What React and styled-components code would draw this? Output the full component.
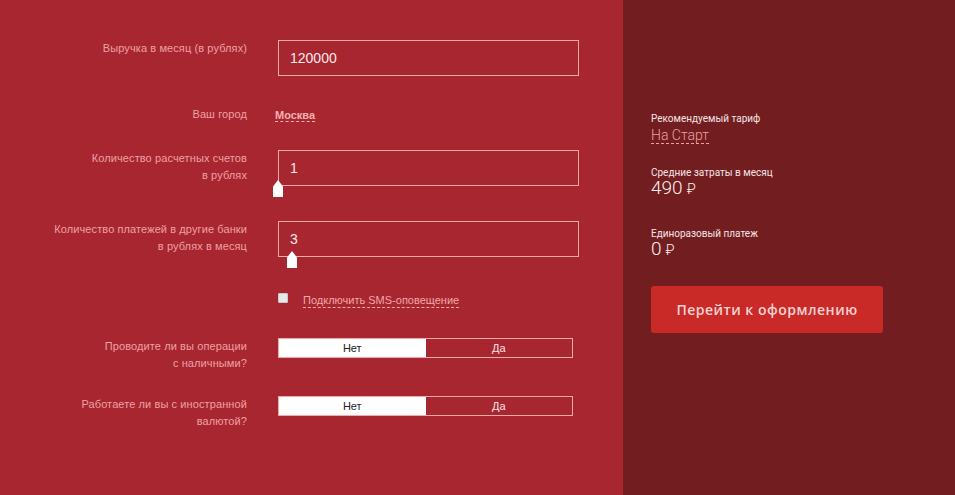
import React from "react";
import styled, { createGlobalStyle } from "styled-components";

const GlobalStyle = createGlobalStyle`
  html, body {
    margin: 0;
    padding: 0;
    background: #a8262f;
  }
  body {
    font-family: "Liberation Sans", Arial, sans-serif;
  }
`;

const Page = styled.div`
  display: flex;
  width: 955px;
  height: 495px;
  overflow: hidden;
`;

const FormPanel = styled.div`
  width: 623px;
  background: #a8262f;
  padding-top: 40px;
  box-sizing: border-box;
`;

const SidePanel = styled.div`
  flex: 1;
  background: #721d20;
  padding: 113px 0 0 28px;
  box-sizing: border-box;
  font-family: Roboto, "Liberation Sans", sans-serif;
`;

const Row = styled.div`
  display: grid;
  grid-template-columns: 247px 301px;
  column-gap: 31px;
  margin-top: ${(p) => p.$mt || 0}px;
  min-height: ${(p) => p.$h || 0}px;
  align-items: ${(p) => (p.$center ? "center" : "start")};
`;

const Label = styled.div`
  text-align: right;
  font-size: 11px;
  line-height: 17px;
  letter-spacing: 0.1px;
  color: #eea0a5;
`;

const Field = styled.div`
  position: relative;
  width: 301px;
`;

const Input = styled.div`
  height: 36px;
  box-sizing: border-box;
  border: 1px solid #f3a8aa;
  padding-left: 11px;
  display: flex;
  align-items: center;
  font-size: 14px;
  color: #fbe9ea;
`;

const Handle = styled.span`
  position: absolute;
  top: 30px;
  left: ${(p) => p.$left}px;
  width: 10px;
  height: 17px;
  background: #fff;
  clip-path: polygon(50% 0, 100% 38%, 100% 100%, 0 100%, 0 38%);
`;

const DashedLink = styled.span`
  display: inline-block;
  font-size: ${(p) => p.$size || 11}px;
  font-weight: ${(p) => p.$weight || 400};
  color: ${(p) => p.$color || "#f2a6aa"};
  line-height: 1.1;
  border-bottom: 1px dashed ${(p) => p.$color || "#f2a6aa"};
  margin-left: ${(p) => p.$ml || 0}px;
`;

const CheckRow = styled.label`
  display: flex;
  align-items: center;
  gap: 15px;
`;

const Check = styled.span`
  width: 8px;
  height: 8px;
  margin-top: -6px;
  border: 1px solid #c9c9c9;
  background: #e8e8e8;
  border-radius: 1px;
`;

const Toggle = styled.div`
  display: grid;
  grid-template-columns: 1fr 1fr;
  width: 295px;
  height: 20px;
  box-sizing: border-box;
  border: 1px solid #f3a8aa;
`;

const ToggleOption = styled.div`
  display: flex;
  align-items: center;
  justify-content: center;
  font-size: 11px;
  background: ${(p) => (p.$active ? "#ffffff" : "transparent")};
  color: ${(p) => (p.$active ? "#222" : "#fbe3e4")};
`;

const Caption = styled.div`
  font-size: 10px;
  line-height: 12px;
  color: #f6e4e4;
  margin-top: ${(p) => p.$mt || 0}px;
`;

const Amount = styled.div`
  font-size: 19px;
  line-height: 18px;
  font-weight: 300;
  color: #fbeeee;
  span {
    font-size: 14px;
    margin-left: 4px;
  }
`;

const Button = styled.button`
  display: block;
  margin-top: 27px;
  width: 232px;
  height: 47px;
  border: none;
  border-radius: 3px;
  background: #c92a27;
  color: #f7d3d2;
  font-family: "Open Sans", sans-serif;
  font-size: 14px;
  font-weight: 600;
  letter-spacing: 0.5px;
  cursor: pointer;
`;

const YesNo = ({ label }) => (
  <>
    <Label>{label}</Label>
    <Toggle>
      <ToggleOption $active>Нет</ToggleOption>
      <ToggleOption>Да</ToggleOption>
    </Toggle>
  </>
);

export default function App() {
  return (
    <Page>
      <GlobalStyle />
      <FormPanel>
        <Row>
          <Label>Выручка в месяц (в рублях)</Label>
          <Field>
            <Input>120000</Input>
          </Field>
        </Row>
        <Row $mt={28} $h={20} $center>
          <Label>Ваш город</Label>
          <div>
            <DashedLink $weight={700} $ml={-3} $color="#f6b0b3">
              Москва
            </DashedLink>
          </div>
        </Row>
        <Row $mt={26}>
          <Label>
            Количество расчетных счетов
            <br />в рублях
          </Label>
          <Field>
            <Input>1</Input>
            <Handle $left={-5} />
          </Field>
        </Row>
        <Row $mt={35}>
          <Label>
            Количество платежей в другие банки
            <br />в рублях в месяц
          </Label>
          <Field>
            <Input>3</Input>
            <Handle $left={9} />
          </Field>
        </Row>
        <Row $mt={35} $h={18} $center>
          <div />
          <CheckRow>
            <Check />
            <DashedLink>Подключить SMS-оповещение</DashedLink>
          </CheckRow>
        </Row>
        <Row $mt={28}>
          <YesNo
            label={
              <>
                Проводите ли вы операции
                <br />с наличными?
              </>
            }
          />
        </Row>
        <Row $mt={24}>
          <YesNo
            label={
              <>
                Работаете ли вы с иностранной
                <br />
                валютой?
              </>
            }
          />
        </Row>
      </FormPanel>
      <SidePanel>
        <Caption>Рекомендуемый тариф</Caption>
        <DashedLink $size={14} $weight={300} $color="#eea0a2">
          На Старт
        </DashedLink>
        <Caption $mt={23}>Средние затраты в месяц</Caption>
        <Amount>
          490<span>₽</span>
        </Amount>
        <Caption $mt={30}>Единоразовый платеж</Caption>
        <Amount>
          0<span>₽</span>
        </Amount>
        <Button>Перейти к оформлению</Button>
      </SidePanel>
    </Page>
  );
}
